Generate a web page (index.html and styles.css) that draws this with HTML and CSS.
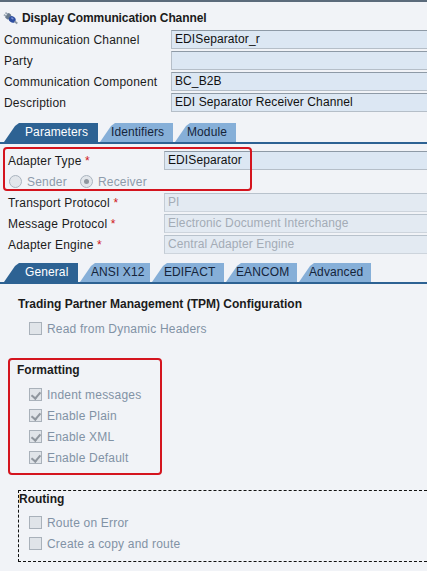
FILE: index.html
```html
<!DOCTYPE html>
<html>
<head>
<meta charset="utf-8">
<link rel="stylesheet" href="styles.css">
</head>
<body>
<div class="page">
  <div class="title">
    <svg class="icon" width="16" height="15" viewBox="0 0 16 15">
      <g transform="rotate(38 8 7.5)">
        <rect x="0" y="5.5" width="3" height="1.6" fill="#9aa6b4"/>
        <rect x="0" y="8" width="3" height="1.6" fill="#9aa6b4"/>
        <rect x="2.5" y="4.5" width="4" height="6" rx="1" fill="#6a7a8c"/>
        <ellipse cx="9.5" cy="7.5" rx="3.6" ry="3" fill="#2e4ea0"/>
        <ellipse cx="9" cy="6.6" rx="1.4" ry="0.9" fill="#7f95d6"/>
        <rect x="12.5" y="6.6" width="3.5" height="1.8" fill="#8a96a4"/>
      </g>
    </svg>
    <span>Display Communication Channel</span>
  </div>

  <div class="rows top">
    <div class="row"><span class="lbl">Communication Channel</span><div class="field">EDISeparator_r</div></div>
    <div class="row"><span class="lbl">Party</span><div class="field"></div></div>
    <div class="row"><span class="lbl">Communication Component</span><div class="field">BC_B2B</div></div>
    <div class="row"><span class="lbl">Description</span><div class="field">EDI Separator Receiver Channel</div></div>
  </div>

  <div class="tabs tabs1">
    <div class="tab active w-param">Parameters</div>
    <div class="tab w-ident">Identifiers</div>
    <div class="tab w-module">Module</div>
  </div>

  <div class="params">
    <div class="highlight h1"></div>
    <div class="row r2"><span class="lbl">Adapter Type <b class="req">*</b></span><div class="field">EDISeparator</div></div>
    <div class="row r2 radios">
      <span class="radio"><i class="rb"></i>Sender</span>
      <span class="radio"><i class="rb on"></i>Receiver</span>
    </div>
    <div class="row r2"><span class="lbl">Transport Protocol <b class="req">*</b></span><div class="field dis">PI</div></div>
    <div class="row r2"><span class="lbl">Message Protocol <b class="req">*</b></span><div class="field dis">Electronic Document Interchange</div></div>
    <div class="row r2"><span class="lbl">Adapter Engine <b class="req">*</b></span><div class="field dis">Central Adapter Engine</div></div>
  </div>

  <div class="tabs tabs2">
    <div class="tab active w-gen">General</div>
    <div class="tab w-ansi">ANSI X12</div>
    <div class="tab w-edifact">EDIFACT</div>
    <div class="tab w-eancom">EANCOM</div>
    <div class="tab w-adv">Advanced</div>
  </div>

  <div class="content">
    <div class="sec-title tpm">Trading Partner Management (TPM) Configuration</div>
    <div class="cb"><i class="box"></i>Read from Dynamic Headers</div>

    <div class="fmt">
      <div class="highlight h2"></div>
      <div class="sec-title">Formatting</div>
      <div class="cb"><i class="box chk"></i>Indent messages</div>
      <div class="cb"><i class="box chk"></i>Enable Plain</div>
      <div class="cb"><i class="box chk"></i>Enable XML</div>
      <div class="cb"><i class="box chk"></i>Enable Default</div>
    </div>

    <div class="routing">
      <div class="sec-title">Routing</div>
      <div class="cb"><i class="box"></i>Route on Error</div>
      <div class="cb"><i class="box"></i>Create a copy and route</div>
    </div>
  </div>
</div>
</body>
</html>
```

FILE: styles.css
```css
* { box-sizing: border-box; }
html, body { margin: 0; padding: 0; }
body {
  background: #f1f3f7;
  font-family: "Liberation Sans", Arial, sans-serif;
  font-size: 12px;
  color: #1b1b1b;
  width: 427px;
  height: 571px;
  overflow: hidden;
  letter-spacing: 0.2px;
}
.page {
  border-top: 2px solid #5b6b7b;
  position: relative;
}
.title {
  display: flex;
  align-items: center;
  gap: 3px;
  height: 18px;
  margin-top: 7px;
  padding-left: 3px;
  font-weight: bold;
  font-size: 12px;
  letter-spacing: -0.1px;
}
.icon { display: block; }
.rows.top { margin-top: 2px; }
.row {
  display: grid;
  grid-template-columns: 171px 1fr;
  align-items: center;
  height: 21px;
}
.lbl { padding-left: 4px; white-space: nowrap; }
.field {
  height: 19px;
  background: #dce7f3;
  border-top: 1px solid #8e9aa6;
  border-bottom: 1px solid #b5bec8;
  border-left: 1px solid #b5bec8;
  padding-left: 3px;
  line-height: 17px;
  color: #111;
  white-space: nowrap;
  overflow: hidden;
  letter-spacing: 0.1px;
}
.field.dis {
  background: #e3eaf2;
  border-top-color: #b8c2cc;
  border-bottom-color: #cdd4dc;
  border-left-color: #c4ccd5;
  color: #a4acb6;
}
.req { color: #d01820; font-weight: normal; }

/* tabs */
.tabs {
  display: flex;
  gap: 2px;
  padding-left: 4px;
  height: 21px;
  border-bottom: 2px solid #2d6293;
  letter-spacing: 0.1px;
}
.tabs1 { margin-top: 10px; }
.tabs2 { margin-top: 8px; }
.tab {
  height: 19px;
  line-height: 19px;
  background: #86afd8;
  color: #15243a;
  padding-left: 12px;
  clip-path: polygon(0 100%, 11px 3px, 15px 0, 100% 0, 100% 100%);
  white-space: nowrap;
}
.tab.active {
  background: #2d6293;
  color: #fff;
  padding-left: 21px;
}
.w-param { width: 94px; }
.w-ident { width: 73px; padding-left: 11px; }
.w-module { width: 61px; padding-left: 12px; }
.w-gen { width: 74px; padding-left: 21px; }
.w-ansi { width: 70px; padding-left: 11px; }
.w-edifact { width: 72px; padding-left: 12px; }
.w-eancom { width: 71px; padding-left: 10px; }
.w-adv { width: 72px; padding-left: 10px; }

/* params */
.params {
  position: relative;
  padding-top: 6px;
}
.row.r2 { grid-template-columns: 164px 1fr; }
.row.r2 .lbl { padding-left: 8px; }
.radios {
  display: flex !important;
  gap: 13px;
  padding-left: 9px;
}
.radio {
  display: flex;
  align-items: center;
  gap: 5px;
  color: #8d9bab;
}
.rb {
  width: 13px;
  height: 13px;
  border-radius: 50%;
  border: 1px solid #aab4bf;
  background: #e2e6eb;
  position: relative;
}
.rb.on::after {
  content: "";
  position: absolute;
  left: 3px; top: 3px;
  width: 5px; height: 5px;
  border-radius: 50%;
  background: #8f969e;
}
.highlight {
  position: absolute;
  border: 2px solid #d4141e;
  border-radius: 4px;
  pointer-events: none;
}
.h1 { left: 3px; top: 3px; width: 249px; height: 44px; }

/* content */
.content { padding-top: 11px; position: relative; }
.sec-title {
  font-weight: bold;
  height: 18px;
  line-height: 18px;
  letter-spacing: 0;
}
.tpm { padding-left: 18px; margin-bottom: 5px; }
.cb {
  display: flex;
  align-items: center;
  gap: 5px;
  height: 21px;
  padding-left: 29px;
  color: #8192a5;
}
.box {
  width: 13px;
  height: 13px;
  border: 1px solid #a9b1ba;
  background: #e0e4e9;
  position: relative;
  flex: none;
}
.box.chk::after {
  content: "";
  position: absolute;
  left: 3px; top: 1px;
  width: 4px; height: 7px;
  border-right: 2px solid #8f969e;
  border-bottom: 2px solid #8f969e;
  transform: rotate(40deg);
}
.fmt {
  position: relative;
  margin-top: 22px;
}
.fmt .sec-title { padding-left: 17px; margin-bottom: 5px; }
.h2 { left: 8px; top: -3px; width: 154px; height: 117px; }
.routing {
  margin-top: 22px;
  margin-left: 18px;
  border: 1px dashed #111;
  border-right: none;
  height: 72px;
}
.routing .sec-title { height: 15px; line-height: 16px; margin-bottom: 6px; }
.routing .cb { padding-left: 10px; }
```
